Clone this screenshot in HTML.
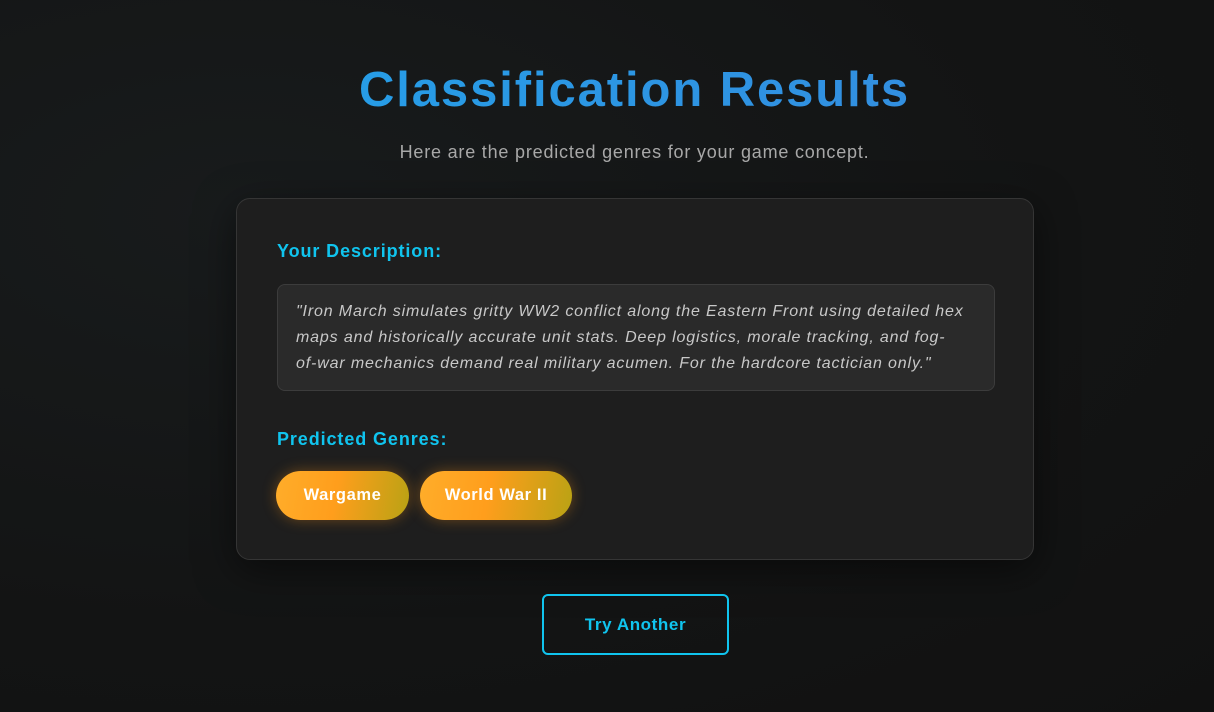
<!DOCTYPE html>
<html><head><meta charset="utf-8"><style>
html,body{margin:0;padding:0}
body{width:1214px;height:712px;overflow:hidden;background:radial-gradient(ellipse at 20% 30%,#181b1c 0%,#131414 60%,#111 100%);font-family:"Liberation Sans",sans-serif;position:relative}
h1{position:absolute;left:0;width:1269px;top:62px;margin:0;text-align:center;font-size:49px;font-weight:bold;letter-spacing:1.9px;color:#27a0e6;background:linear-gradient(90deg,#1fa5ea,#3a86dc);-webkit-background-clip:text;background-clip:text;-webkit-text-fill-color:transparent}
.sub{position:absolute;left:0;width:1269px;top:142px;text-align:center;font-size:18px;letter-spacing:.8px;color:#a8a8a8}
.card{position:absolute;left:236px;top:198px;width:796px;height:360px;background:#1e1e1e;border:1px solid #353535;border-radius:14px;box-shadow:0 10px 40px rgba(0,0,0,.5)}
.h{position:absolute;left:40px;font-size:18px;font-weight:bold;letter-spacing:.9px;color:#10c4ee}
.desc{position:absolute;left:40px;top:85px;width:680px;height:77px;padding:14px 18px;background:#2a2a2a;border:1px solid #3c3c3c;border-radius:8px;font-style:italic;font-size:16px;line-height:26px;color:#c8c8c8;letter-spacing:.85px;white-space:nowrap}
.chip{position:absolute;top:272px;height:49px;border-radius:25px;background:linear-gradient(100deg,#ffad2a 0%,#ff9e1c 45%,#b9a214 100%);box-shadow:0 0 14px rgba(255,150,20,.35);color:#fff;font-weight:bold;font-size:16.5px;line-height:49px;text-align:center;letter-spacing:.6px}
.btn{position:absolute;left:542px;top:594px;width:183px;height:57px;border:2px solid #10c4ee;border-radius:6px;color:#10c4ee;font-weight:bold;font-size:17px;letter-spacing:.6px;line-height:57px;text-align:center}
</style></head><body>
<h1>Classification Results</h1>
<div class="sub">Here are the predicted genres for your game concept.</div>
<div class="card">
<div class="h" style="top:42px">Your Description:</div>
<div class="desc">"Iron March simulates gritty WW2 conflict along the Eastern Front using detailed hex<br>maps and historically accurate unit stats. Deep logistics, morale tracking, and fog-<br>of-war mechanics demand real military acumen. For the hardcore tactician only."</div>
<div class="h" style="top:230px">Predicted Genres:</div>
<div class="chip" style="left:39px;width:133px">Wargame</div>
<div class="chip" style="left:183px;width:152px">World War II</div>
</div>
<div class="btn">Try Another</div>
</body></html>
